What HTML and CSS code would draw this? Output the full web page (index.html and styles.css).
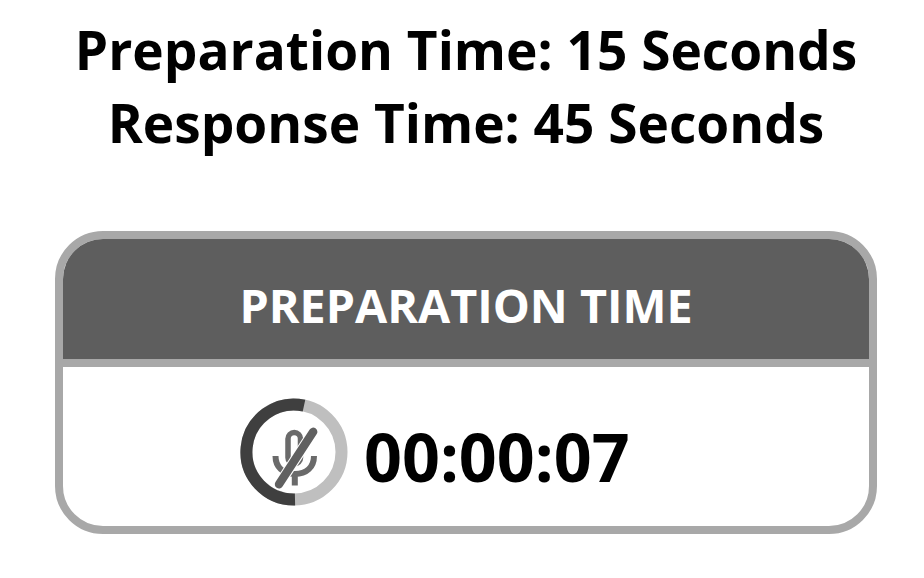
FILE: index.html
```html
<!DOCTYPE html>
<html lang="en">
<head>
<meta charset="utf-8">
<title>Preparation Time</title>
<link rel="stylesheet" href="styles.css">
</head>
<body>
<main class="page">
  <section class="times">
    <p class="line">Preparation Time: 15 Seconds</p>
    <p class="line">Response Time: 45 Seconds</p>
  </section>
  <section class="card">
    <h1 class="card-head">PREPARATION TIME</h1>
    <div class="card-body">
      <svg class="dial" viewBox="0 0 108 108" aria-hidden="true">
        <circle cx="54" cy="54" r="47.500" fill="none" stroke="#bfbfbf" stroke-width="12"/>
        <path d="M55 101.500A47.500 47.500 0 1 1 64 7.600" fill="none" stroke="#3f3f3f" stroke-width="12"/>
        <g fill="none" stroke="#6a6a6a">
          <rect x="48" y="34.500" width="12.500" height="31.500" rx="6.250" stroke-width="5.500"/>
          <path d="M35.500 58C35.500 69 43 76 54.800 76S74 69 74 58M54.800 76V87.500" stroke-width="6"/>
        </g>
        <path d="M39 86.300L73.200 33.800" stroke="#fff" stroke-width="10.500" stroke-linecap="round"/>
        <path d="M39 86.300L73.200 33.800" stroke="#606060" stroke-width="8.400" stroke-linecap="round"/>
      </svg>
      <span class="clock">00:00:07</span>
    </div>
  </section>
</main>
</body>
</html>
```
FILE: styles.css
```css
* { box-sizing: border-box; }
body { margin: 0; background: #fff; color: #000; font-family: "Open Sans", sans-serif; }
.page { height: 578px; padding: 13px 47px 0 55px; overflow: hidden; }
.times { height: 218px; text-align: center; font-weight: 700; font-size: 53.2px; line-height: 73px; white-space: nowrap; }
.line { margin: 0; }
.card { height: 303px; border: 8px solid #a8a8a8; border-radius: 48px; overflow: hidden; }
.card-head { margin: 0; height: 128px; background: #5e5e5e; border-bottom: 8px solid #a8a8a8; color: #fff; font-size: 46.7px; font-weight: 700; line-height: 133px; text-align: center; white-space: nowrap; }
.card-body { display: flex; padding: 31px 0 0 177px; }
.dial { width: 108px; height: 108px; flex: none; }
.clock { margin-left: 16px; font-size: 66.4px; font-weight: 700; line-height: 116px; }
```
